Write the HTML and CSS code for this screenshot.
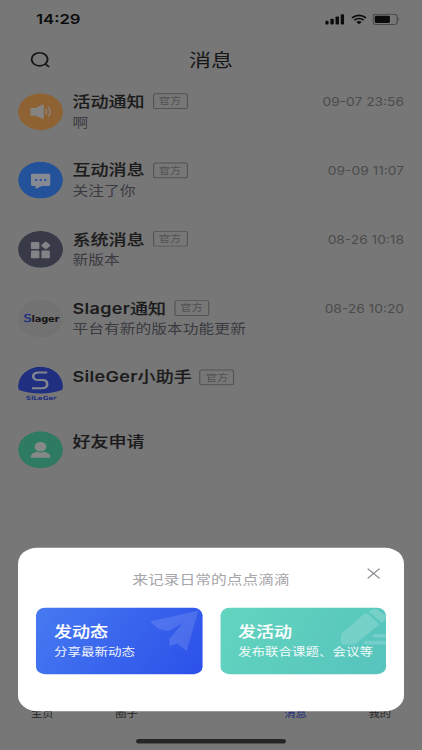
FILE: index.html
```
<!DOCTYPE html>
<html lang="zh-CN">
<head>
<meta charset="utf-8">
<title>消息</title>
<link rel="stylesheet" href="styles.css">
</head>
<body>
<div class="viewport">
<div class="phone">
  <header class="status">
    <span class="clock">14:29</span>
    <div class="status-icons">
      <svg class="signal" width="17" height="12" viewBox="0 0 17 12"><rect x="0" y="7.5" width="3" height="4" rx="1"/><rect x="4.6" y="5.2" width="3" height="6.3" rx="1"/><rect x="9.2" y="2.800" width="3" height="8.700" rx="1"/><rect x="13.800" y="0.300" width="3" height="11.200" rx="1"/></svg>
      <svg class="wifi" width="14" height="12" viewBox="0 0 15 12"><path d="M.8 4.300Q7.500-1.700 14.200 4.300M3.100 6.900Q7.500 3 11.900 6.900" fill="none" stroke="#0c0c0c" stroke-width="1.900"/><path d="M4.900 8.900Q7.500 6.800 10.100 8.900L7.500 11.600Z"/></svg>
      <svg class="battery" width="25" height="12" viewBox="0 0 25 12"><rect x=".5" y=".5" width="21.500" height="11" rx="3" fill="none" stroke="#484848"/><rect x="2" y="2" width="13.500" height="8" rx="1.400"/><path d="M23.200 4q1.500 2 0 4z" fill="#484848"/></svg>
    </div>
  </header>
  <div class="navbar">
    <svg class="search" width="18" height="18" viewBox="0 0 18 18"><circle cx="8.200" cy="8.200" r="7.100"/><path d="M13 13l3.600 3.600"/></svg>
    <h1>消息</h1>
  </div>
  <main class="list">
    <section class="row">
      <svg class="avatar" viewBox="0 0 40 40"><circle cx="20" cy="20" r="20" fill="#8e6233"/><path d="M12.300 15.800h3.300L21 12.600q1.900-.8 1.900 1.200v12.400q0 2-1.900 1.200l-5.400-3.200h-3.300q-1.300 0-1.300-1.300v-5.800q0-1.300 1.300-1.300z" fill="#868482"/><path d="M24.300 17.200q2 2.800 0 5.600M26.700 15q3.800 5 0 10" fill="none" stroke="#868482" stroke-width="1.300"/></svg>
      <div class="text"><div class="head"><h2>活动通知</h2><span class="tag">官方</span><time>09-07 23:56</time></div><p>啊</p></div>
    </section>
    <section class="row">
      <svg class="avatar" viewBox="0 0 40 40"><circle cx="20" cy="20" r="20" fill="#23519a"/><path d="M13 13h14.200q1.500 0 1.500 1.500v10.300q0 1.500-1.500 1.500h-5.800l-4.800 2.800q-1 .5-1-.6v-2.200H13q-1.500 0-1.500-1.500V14.500q0-1.500 1.500-1.500z" fill="#858993"/><g fill="#23519a"><circle cx="16.200" cy="19.800" r="1.100"/><circle cx="20.200" cy="19.800" r="1.100"/><circle cx="24.200" cy="19.800" r="1.100"/></g></svg>
      <div class="text"><div class="head"><h2>互动消息</h2><span class="tag">官方</span><time>09-09 11:07</time></div><p>关注了你</p></div>
    </section>
    <section class="row">
      <svg class="avatar" viewBox="0 0 40 40"><circle cx="20" cy="20" r="20" fill="#383a48"/><g fill="#828386"><rect x="11.500" y="12" width="7.500" height="7.700" rx="1.300"/><rect x="11.500" y="21.300" width="7.500" height="8.400" rx="1.300"/><rect x="20.800" y="21.300" width="7.500" height="8.400" rx="1.300"/><rect x="21.500" y="12.500" width="6.400" height="6.400" rx="1.200" transform="rotate(45 24.700 15.700)"/></g></svg>
      <div class="text"><div class="head"><h2>系统消息</h2><span class="tag">官方</span><time>08-26 10:18</time></div><p>新版本</p></div>
    </section>
    <section class="row">
      <div class="avatar slager"><span><b>S</b>lager</span></div>
      <div class="text"><div class="head"><h2><span class="latin">Slager</span>通知</h2><span class="tag">官方</span><time>08-26 10:20</time></div><p>平台有新的版本功能更新</p></div>
    </section>
    <section class="row assistant">
      <svg class="avatar" viewBox="0 0 40 40"><path d="M0 25C-1 11 8 0 20 0s21 11 20 25Q31 29 20 29T0 25z" fill="#202f80"/><path d="M26 6.200H18.500Q13.500 6.200 13.500 10.300T18.500 14.500H21.500Q26 14.500 26 18.900T21 23.300H12.500" fill="none" stroke="#84868e" stroke-width="2.200"/><text class="logo-text" x="20.700" y="36.200">SiLeGer</text></svg>
      <div class="text"><div class="head"><h2><span class="latin">SileGer</span>小助手</h2><span class="tag">官方</span></div></div>
    </section>
    <section class="row friends">
      <svg class="avatar" viewBox="0 0 40 40"><circle cx="20" cy="20" r="20" fill="#2f7a62"/><g fill="#858987"><circle cx="20" cy="16.700" r="5.200"/><path d="M11.200 28.500q.3-5.500 6-6.300 2.800 1.700 5.600 0 5.700.8 6 6.300z"/></g></svg>
      <div class="text"><div class="head"><h2>好友申请</h2></div></div>
    </section>
  </main>
  <nav class="tabs">
    <span>主页</span><span>圈子</span><span></span><span class="active">消息</span><span>我的</span>
  </nav>
  <div class="home-bar"></div>
  <div class="sheet">
    <div class="sheet-title">来记录日常的点点滴滴</div>
    <svg class="close" width="12" height="12" viewBox="0 0 12 12"><path d="M.7.700l10.600 10.600M11.300.700L.7 11.300"/></svg>
    <div class="cards">
      <div class="card blue">
        <svg class="deco" viewBox="0 0 148 73"><path d="M102 15L145 3 118 25.500 109 23z" fill="#fff" opacity=".13"/><path d="M145 3L134.500 47 126 39 119 42V34L131 17 118 25.500z" fill="#fff" opacity=".13"/></svg>
        <h3>发动态</h3><p>分享最新动态</p>
      </div>
      <div class="card green">
        <svg class="deco" viewBox="0 0 148 73"><g fill="#fff" opacity=".17"><path d="M108 28L128 7q2-2 4 0l8 9q2 2 0 4L122 38q-2 2-4 2h-8q-2.500 0-2.500-2.500V31z"/><path d="M132 4l3-2q2.500-2 5 0l7 6q2 3 0 5l-3 3z"/><rect x="136" y="29" width="12" height="3.500" rx="1.700"/><rect x="128" y="36" width="20" height="4" rx="2"/></g></svg>
        <h3>发活动</h3><p>发布联合课题、会议等</p>
      </div>
    </div>
  </div>
</div>
</div>
</body>
</html>
```
FILE: styles.css
```
* { box-sizing: border-box; margin: 0; padding: 0; }
body { background: #777; font-family: Inter, "Noto Sans CJK SC", sans-serif; }
.viewport { width: 422px; height: 750px; overflow: hidden; }
/* 375x812 layout fitted to the 422x750 viewport */
.phone {
  position: relative;
  display: flex;
  flex-direction: column;
  width: 375px;
  height: 812px;
  background: #777;
  transform: scale(1.12533, 0.92365);
  transform-origin: 0 0;
}
.status { display: flex; justify-content: space-between; align-items: center; height: 41px; padding: 0 19px 0 32px; }
.clock { padding-top: 1px; font-size: 14.800px; font-weight: 600; color: #0c0c0c; line-height: 20px; }
.status-icons { display: flex; align-items: center; gap: 5.500px; fill: #0c0c0c; }
.navbar { display: grid; grid-template-columns: 40px 1fr 40px; align-items: center; height: 47px; padding: 0 27px; }
.search { fill: none; stroke: #161616; stroke-width: 1.700; }
.navbar h1 { text-align: center; font-size: 19.500px; font-weight: 400; line-height: 24px; color: #161616; }
.list { flex: 1; padding: 12.500px 16px 0; }
.row { display: flex; gap: 8.500px; height: 74.700px; }
.row.assistant { height: 69.500px; }
.assistant .avatar { margin-top: -2.700px; }
.friends .avatar { margin-top: -2px; }
.avatar { flex: none; width: 40px; height: 40px; border-radius: 50%; }
.text { flex: 1; display: flex; flex-direction: column; gap: 2px; }
.head { display: flex; align-items: center; height: 18px; }
.head h2 { font-size: 16px; font-weight: 500; line-height: 18px; color: #1b1b1c; white-space: nowrap; -webkit-text-stroke: .15px #1b1b1c; }
.latin { font-weight: 600; letter-spacing: .25px; -webkit-text-stroke: 0; }
.tag { margin-left: 7px; width: 31px; height: 17px; border: 1px solid #535353; border-radius: 2px; color: #515151; font-size: 10px; line-height: 15px; text-align: center; }
.head time { margin-left: auto; padding-top: 2px; font-size: 12.250px; line-height: 18px; color: #4b4b4b; }
.text p { font-size: 14px; line-height: 22px; color: #3a3a41; }
.slager { display: flex; align-items: center; justify-content: center; padding-left: 1.500px; background: #727272; font-family: "DejaVu Sans", sans-serif; font-size: 8.800px; font-weight: 700; color: #161616; letter-spacing: -.2px; }
.slager b { color: #202f80; font-size: 11.500px; font-weight: 400; -webkit-text-stroke: .4px #202f80; }
.logo-text { font-family: "DejaVu Sans", sans-serif; font-size: 6.300px; font-weight: 700; fill: #202f80; text-anchor: middle; }
.tabs { display: grid; grid-template-columns: repeat(5, 1fr); align-items: center; height: 85px; padding-top: 4px; border-top: 1px solid #747474; text-align: center; font-size: 10px; line-height: 14px; color: #252525; }
.tabs .active { color: #1b2878; }
.home-bar { position: absolute; left: 121px; bottom: 7px; width: 133px; height: 5px; border-radius: 3px; background: #262626; }
.sheet { position: absolute; left: 16px; top: 593px; width: 343px; height: 177px; padding: 22.500px 16px 0; border-radius: 17px; background: #fff; }
.sheet-title { text-align: center; font-size: 14px; line-height: 22px; color: #a5a5ab; }
.close { position: absolute; right: 21px; top: 21.500px; stroke: #85858e; stroke-width: 1.100; }
.cards { display: grid; grid-template-columns: 1fr 1fr; gap: 16px; margin-top: 20.200px; }
.card { position: relative; height: 72.500px; padding: 15px 0 0 16px; border-radius: 8px; overflow: hidden; color: #fff; }
.blue { background: linear-gradient(120deg, #467af1, #2c50e9); }
.green { background: linear-gradient(120deg, #62d5bf, #57c3bd); }
.deco { position: absolute; left: 0; top: 0; width: 100%; height: 100%; }
.card h3 { position: relative; font-size: 16px; font-weight: 500; line-height: 22px; -webkit-text-stroke: .15px #fff; }
.card p { position: relative; margin-top: 2px; font-size: 12px; line-height: 18px; white-space: nowrap; opacity: .92; }
```
